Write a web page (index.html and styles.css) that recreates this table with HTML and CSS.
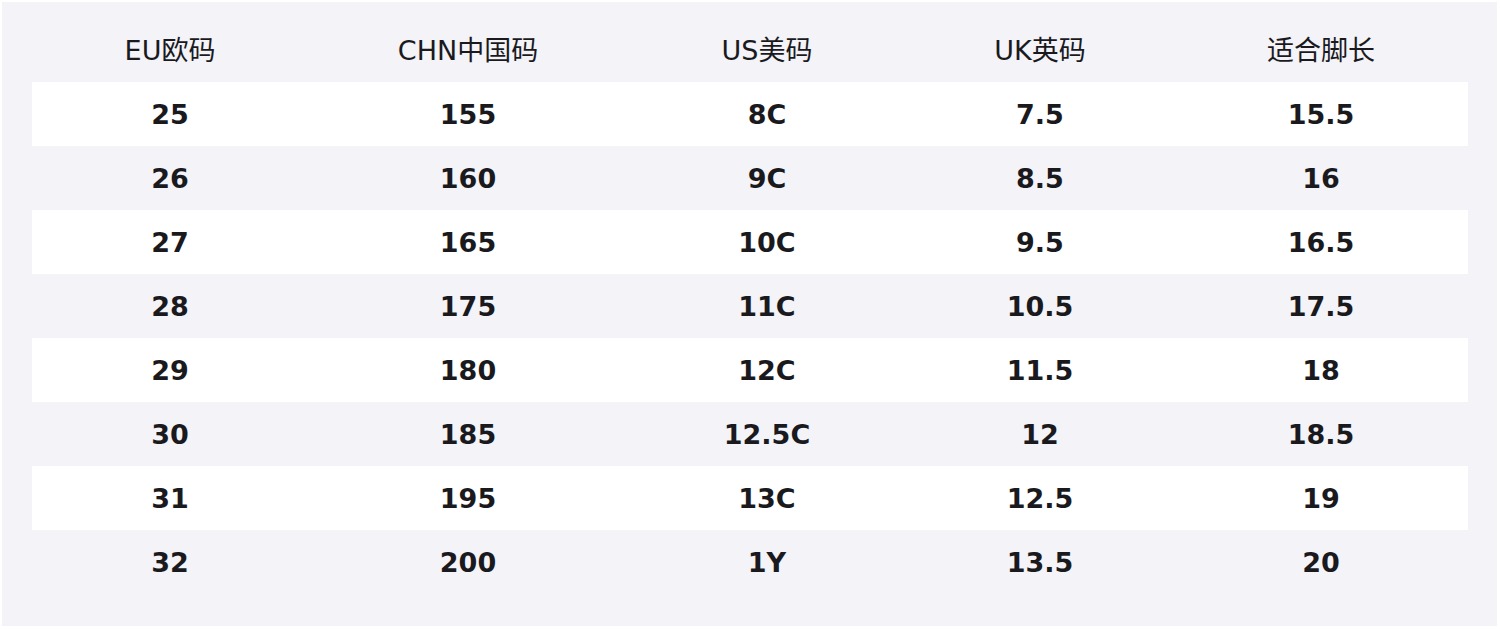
FILE: index.html
```html
<!DOCTYPE html>
<html lang="zh-CN">
<head>
<meta charset="utf-8">
<link rel="stylesheet" href="styles.css">
</head>
<body>
<div class="panel">
<table class="size-table">
<colgroup>
<col class="c1"><col class="c2"><col class="c3"><col class="c4"><col class="c5">
</colgroup>
<thead>
<tr><th>EU欧码</th><th>CHN中国码</th><th>US美码</th><th>UK英码</th><th>适合脚长</th></tr>
</thead>
<tbody>
<tr><td>25</td><td>155</td><td>8C</td><td>7.5</td><td>15.5</td></tr>
<tr><td>26</td><td>160</td><td>9C</td><td>8.5</td><td>16</td></tr>
<tr><td>27</td><td>165</td><td>10C</td><td>9.5</td><td>16.5</td></tr>
<tr><td>28</td><td>175</td><td>11C</td><td>10.5</td><td>17.5</td></tr>
<tr><td>29</td><td>180</td><td>12C</td><td>11.5</td><td>18</td></tr>
<tr><td>30</td><td>185</td><td>12.5C</td><td>12</td><td>18.5</td></tr>
<tr><td>31</td><td>195</td><td>13C</td><td>12.5</td><td>19</td></tr>
<tr><td>32</td><td>200</td><td>1Y</td><td>13.5</td><td>20</td></tr>
</tbody>
</table>
</div>
</body>
</html>
```

FILE: styles.css
```css
html, body {
  margin: 0;
  padding: 0;
  background: #ffffff;
}
body {
  font-family: "DejaVu Sans", "Noto Sans CJK SC", sans-serif;
  color: #1a1a1e;
}
.panel {
  margin: 2px 3px 3px 2px;
  height: 624px;
  box-sizing: border-box;
  background: #f3f3f8;
  padding: 16px 29px 32px 30px;
}
.size-table {
  width: 100%;
  border-collapse: collapse;
  table-layout: fixed;
}
.c1 { width: 276px; }
.c2 { width: 320px; }
.c3 { width: 278px; }
.c4 { width: 268px; }
.c5 { width: 294px; }
.size-table th,
.size-table td {
  height: 64px;
  padding: 0;
  text-align: center;
  vertical-align: middle;
  font-size: 27px;
}
.size-table th {
  font-weight: normal;
  padding-bottom: 3px;
  height: 61px;
}
.size-table td {
  font-weight: bold;
}
.size-table tbody tr:nth-child(odd) {
  background: #ffffff;
}
```
